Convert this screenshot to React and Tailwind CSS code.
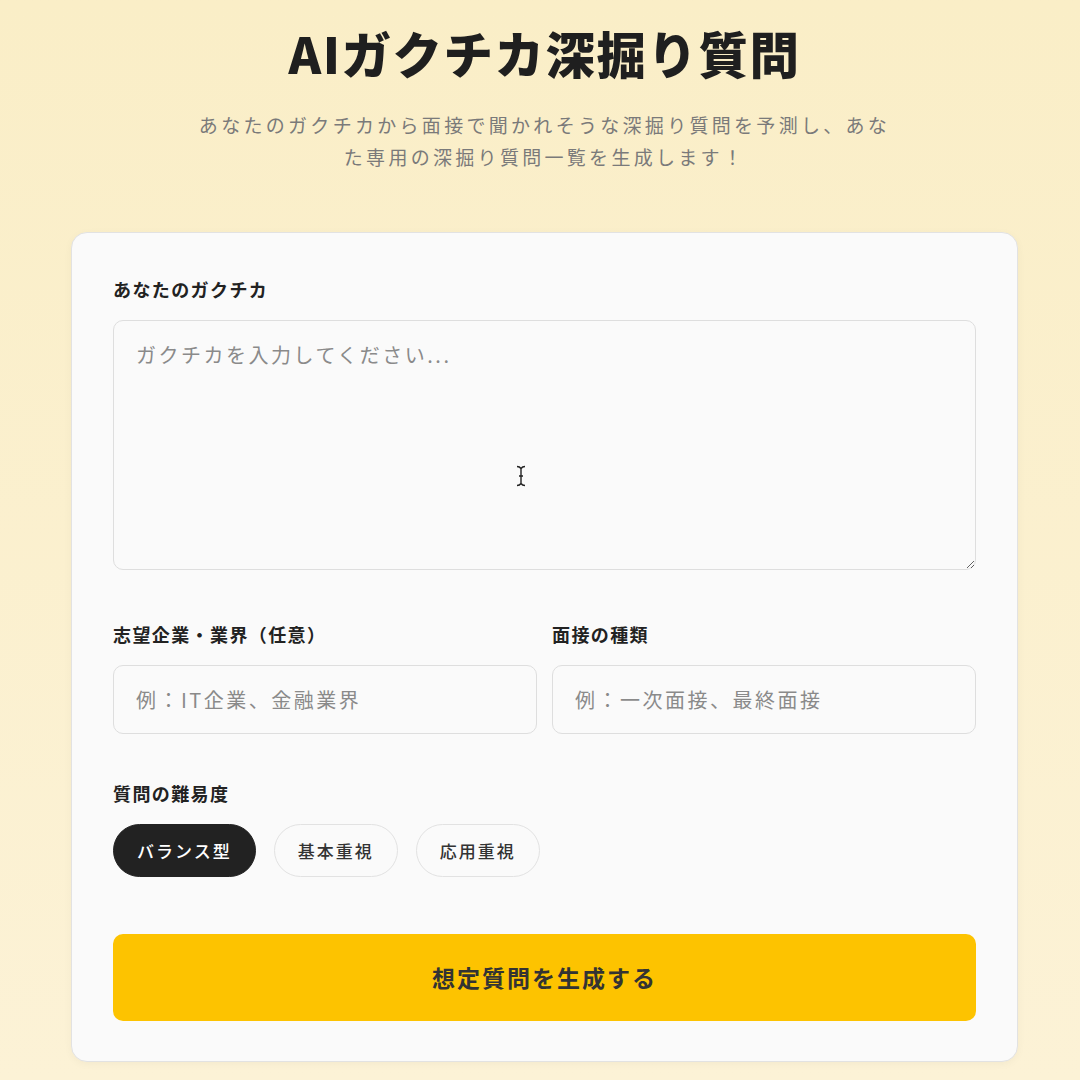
import { useState } from "react";

const LEVELS = ["バランス型", "基本重視", "応用重視"];

function Label({ children }) {
  return (
    <div className="mb-[19px] text-[18px] leading-[24px] font-bold tracking-[1.4px] text-[#222]">
      {children}
    </div>
  );
}

function IBeam() {
  // mouse cursor left over the textarea in the screenshot
  return (
    <svg
      className="pointer-events-none absolute left-[403px] top-[145px]"
      width="10"
      height="22"
      viewBox="0 0 10 22"
      fill="none"
      stroke="#222"
      strokeWidth="1.4"
    >
      <path d="M1 1.5c2 0 3 .5 4 2c1-1.5 2-2 4-2M5 3.5v15M1 20.5c2 0 3-.5 4-2c1 1.5 2 2 4 2M3 11h4" />
    </svg>
  );
}

export default function App() {
  const [level, setLevel] = useState("バランス型");

  return (
    <div
      className="min-h-[1080px] w-full bg-gradient-to-b from-[#faeec7] to-[#fcf2d6] pl-[9px] pt-[21px] text-[#222]"
      style={{ fontFamily: '"Noto Sans CJK JP", "Noto Sans", sans-serif' }}
    >
      <div className="flex flex-col items-center">
        <h1 className="text-[49.5px] leading-[64px] font-black tracking-[1.5px] text-[#1f1f1f]">
          AIガクチカ深掘り質問
        </h1>
        <p className="mt-[24px] w-[702px] text-center text-[19px] leading-[32px] tracking-[3.3px] text-[#7a7a7a]">
          あなたのガクチカから面接で聞かれそうな深掘り質問を予測し、あなた専用の深掘り質問一覧を生成します！
        </p>

        <div className="mt-[59px] w-[947px] rounded-[16px] border border-[#e2e2e2] bg-[#fafafa] px-[41px] pt-[44px] pb-[40px] shadow-[0_2px_8px_rgba(0,0,0,0.04)]">
          <Label>あなたのガクチカ</Label>
          <div className="relative">
            <textarea
              className="block h-[250px] w-full resize-y rounded-[10px] border border-[#dedede] bg-[#fafafa] px-[22px] py-[19px] text-[20px] leading-[30px] tracking-[2.5px] text-[#222] outline-none placeholder:text-[#8a8a8a]"
              placeholder="ガクチカを入力してください..."
            />
            <IBeam />
          </div>

          <div className="mt-[52px] grid grid-cols-2 gap-[15px]">
            <div>
              <Label>志望企業・業界（任意）</Label>
              <input
                className="block h-[69px] w-full rounded-[10px] border border-[#dedede] bg-[#fafafa] px-[22px] text-[20px] tracking-[2.5px] text-[#222] outline-none placeholder:text-[#8a8a8a]"
                placeholder="例：IT企業、金融業界"
              />
            </div>
            <div>
              <Label>面接の種類</Label>
              <input
                className="block h-[69px] w-full rounded-[10px] border border-[#dedede] bg-[#fafafa] px-[22px] text-[20px] tracking-[2.5px] text-[#222] outline-none placeholder:text-[#8a8a8a]"
                placeholder="例：一次面接、最終面接"
              />
            </div>
          </div>

          <div className="mt-[47px]">
            <Label>質問の難易度</Label>
            <div className="flex gap-[18px]">
              {LEVELS.map((l) => (
                <button
                  key={l}
                  onClick={() => setLevel(l)}
                  className={
                    level === l
                      ? "h-[53px] rounded-full border border-[#222] bg-[#222] px-[23px] text-[17px] font-medium tracking-[2px] text-white"
                      : "h-[53px] rounded-full border border-[#e2e2e2] bg-[#fafafa] px-[23px] text-[17px] font-medium tracking-[2px] text-[#333]"
                  }
                >
                  {l}
                </button>
              ))}
            </div>
          </div>

          <button className="mt-[57px] flex h-[87px] w-full items-center justify-center rounded-[10px] bg-[#fdc300] text-[23px] font-bold tracking-[2px] text-[#333]">
            想定質問を生成する
          </button>
        </div>
      </div>
    </div>
  );
}
